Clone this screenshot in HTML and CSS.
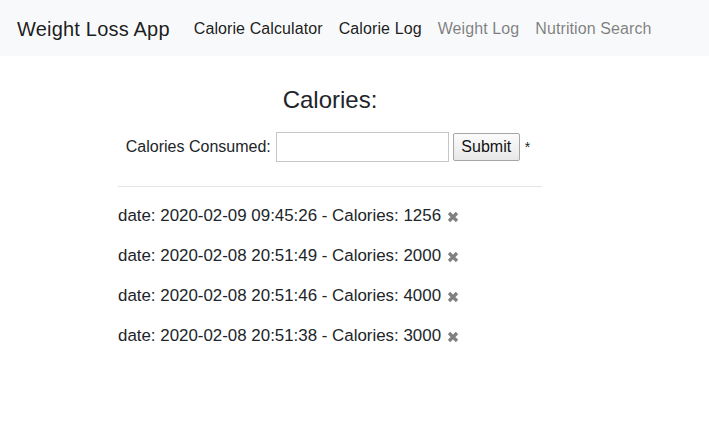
FILE: index.html
```html
<!DOCTYPE html>
<html>
<head>
<meta charset="utf-8">
<link rel="stylesheet" href="styles.css">
</head>
<body>
<nav class="navbar">
  <span class="brand">Weight Loss App</span>
  <a class="nav-link active">Calorie Calculator</a>
  <a class="nav-link active">Calorie Log</a>
  <a class="nav-link">Weight Log</a>
  <a class="nav-link">Nutrition Search</a>
</nav>
<main class="content">
  <h2 class="title">Calories:</h2>
  <form class="cal-form">
    <label class="label">Calories Consumed:</label>
    <input class="input" type="text">
    <button class="btn" type="button">Submit</button>
    <span class="req">*</span>
  </form>
  <hr class="divider">
  <ul class="entries">
    <li class="entry"><span>date: 2020-02-09 09:45:26 - Calories: 1256</span><svg class="x" viewBox="0 0 12 12"><path d="M2 2L10 10M10 2L2 10"/></svg></li>
    <li class="entry"><span>date: 2020-02-08 20:51:49 - Calories: 2000</span><svg class="x" viewBox="0 0 12 12"><path d="M2 2L10 10M10 2L2 10"/></svg></li>
    <li class="entry"><span>date: 2020-02-08 20:51:46 - Calories: 4000</span><svg class="x" viewBox="0 0 12 12"><path d="M2 2L10 10M10 2L2 10"/></svg></li>
    <li class="entry"><span>date: 2020-02-08 20:51:38 - Calories: 3000</span><svg class="x" viewBox="0 0 12 12"><path d="M2 2L10 10M10 2L2 10"/></svg></li>
  </ul>
</main>
</body>
</html>
```
FILE: styles.css
```css
* { box-sizing: border-box; }
body {
  margin: 0;
  font-family: "Liberation Sans", Arial, sans-serif;
  color: #212529;
  background: #fff;
}
.navbar {
  height: 56px;
  background: #f8f9fa;
  display: flex;
  align-items: center;
  padding: 2px 16px 0 17px;
}
.brand {
  font-size: 20px;
  letter-spacing: .2px;
  color: rgba(0,0,0,.9);
  margin-right: 16px;
}
.nav-link {
  font-size: 16px;
  letter-spacing: .1px;
  padding: 0 8px;
  color: rgba(0,0,0,.5);
}
.nav-link.active { color: rgba(0,0,0,.9); }
.content {
  margin-left: 118px;
  width: 424px;
  padding-top: 29px;
}
.title {
  margin: 0;
  font-size: 24px;
  font-weight: 400;
  line-height: 29px;
  text-align: center;
}
.cal-form {
  margin-top: 18px;
  display: flex;
  align-items: center;
  justify-content: center;
  height: 30px;
  font-size: 16px;
}
.label { margin-right: 5px; margin-left: -4px; }
.input {
  width: 173px;
  height: 30px;
  border: 1px solid #c6c6c6;
  margin: 0 4px 0 0;
  font-size: 16px;
}
.btn {
  height: 28px;
  width: 67px;
  font-family: inherit;
  font-size: 16px;
  color: #111;
  border: 1px solid #a6a6a6;
  border-radius: 2px;
  background: linear-gradient(#fbfbfb, #e8e8e8);
  padding: 0;
}
.req { margin-left: 5px; font-size: 14px; }
.divider {
  margin: 24px 0 9px;
  border: 0;
  border-top: 1px solid #e5e5e5;
}
.entries {
  list-style: none;
  margin: 0;
  padding: 0;
}
.entry {
  height: 40px;
  display: flex;
  align-items: center;
  font-size: 16.9px;
  color: #212529;
}
.x {
  width: 12px;
  height: 12px;
  margin-left: 6px;
  margin-top: 2px;
}
.x path {
  stroke: #808080;
  stroke-width: 3.2;
  fill: none;
}
```
